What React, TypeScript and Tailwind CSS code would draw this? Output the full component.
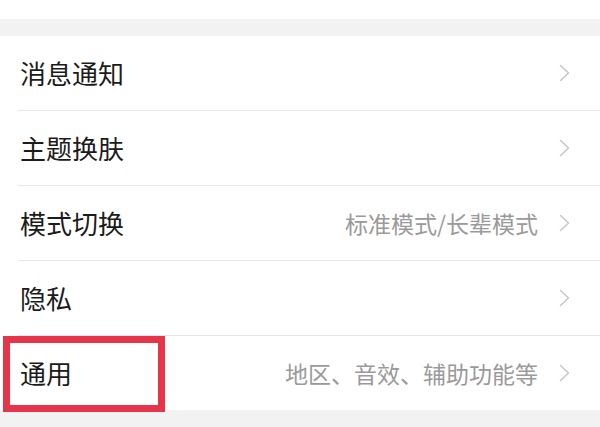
type Row = { title: string; hint?: string };

const ROWS: Row[] = [
  { title: '消息通知' },
  { title: '主题换肤' },
  { title: '模式切换', hint: '标准模式/长辈模式' },
  { title: '隐私' },
  { title: '通用', hint: '地区、音效、辅助功能等' },
];

function Chevron() {
  return (
    <svg width="11" height="18" viewBox="0 0 11 18" fill="none" aria-hidden>
      <polyline points="1.5,1.5 9.5,9 1.5,16.5" stroke="#c6c6c6" strokeWidth="1.5" strokeLinecap="round" strokeLinejoin="round" />
    </svg>
  );
}

function SettingRow({ row, last, marked }: { row: Row; last: boolean; marked?: boolean }) {
  return (
    <div className="relative">
      <div className="flex h-[74px] items-center pl-5 pr-[30px]">
        <span className="flex-1 text-[26px] leading-none text-[#1b1b1b]">{row.title}</span>
        {row.hint && (
          <span className="mr-[21px] text-[23px] leading-none text-[#9a9a9a]">{row.hint}</span>
        )}
        <Chevron />
      </div>
      {!last && <div className="ml-[18px] h-px bg-[#e6e6e6]" />}
      {/* highlight frame drawn over the row */}
      {marked && (
        <div className="pointer-events-none absolute left-[3px] top-0 h-[76px] w-[162px] border-[7px] border-[#e6344b]" />
      )}
    </div>
  );
}

export default function App() {
  return (
    <div
      className="h-[427px] w-[600px] overflow-hidden bg-[#f2f2f2]"
      style={{ fontFamily: '"Noto Sans CJK SC", "Noto Sans", sans-serif' }}
    >
      <div className="h-[19px] bg-white" />
      <div className="mt-[17px] bg-white">
        {ROWS.map((row, i) => (
          <SettingRow key={row.title} row={row} last={i === ROWS.length - 1} marked={row.title === '通用'} />
        ))}
      </div>
    </div>
  );
}
